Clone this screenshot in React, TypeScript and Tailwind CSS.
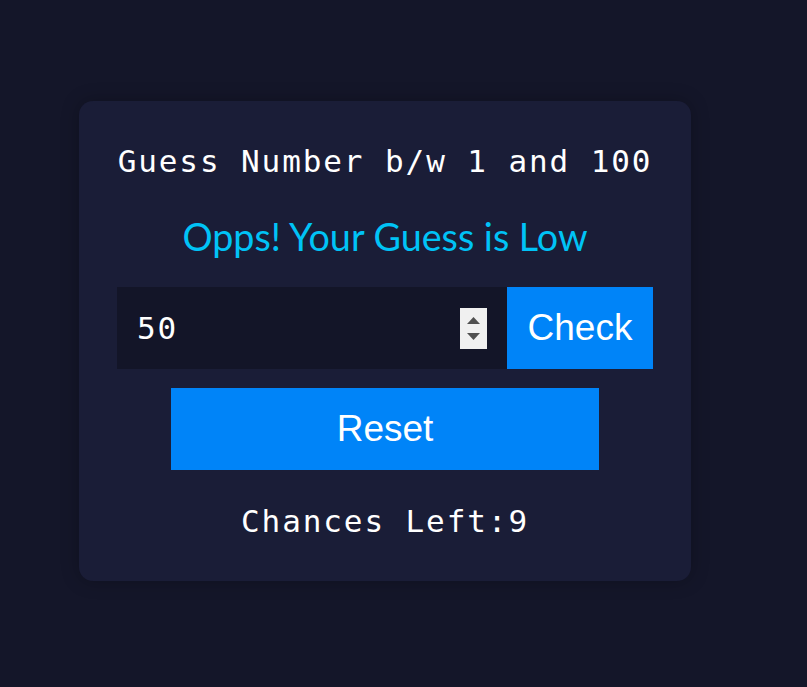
import { useState } from "react";

const MONO = "font-['DejaVu_Sans_Mono',monospace]";

function Spinner() {
  return (
    <div className="flex h-[41px] w-[27px] shrink-0 flex-col items-center justify-center gap-[9px] bg-[#f0f0f0]">
      <svg width="13" height="7" viewBox="0 0 13 7">
        <path d="M6.5 0 L13 7 L0 7 Z" fill="#505050" />
      </svg>
      <svg width="13" height="7" viewBox="0 0 13 7">
        <path d="M0 0 L13 0 L6.5 7 Z" fill="#505050" />
      </svg>
    </div>
  );
}

export default function App() {
  const [guess, setGuess] = useState("50");
  const [chances, setChances] = useState(9);

  return (
    <div className="min-h-screen bg-[#141629] pl-[79px] pt-[101px]">
      <div className="flex w-[612px] flex-col items-center rounded-[14px] bg-[#1a1d37] px-[38px] pb-[38px] pt-[38px] shadow-[0_0_18px_rgba(0,0,0,0.25)]">
        <h1 className={`${MONO} whitespace-nowrap text-[31px] leading-[44px] tracking-[1.9px] text-white`}>
          Guess Number b/w 1 and 100
        </h1>
        <p className="mt-[32px] whitespace-nowrap font-['Lato',sans-serif] text-[37.7px] leading-[44px] text-[#00c3f6]">
          Opps! Your Guess is Low
        </p>
        <div className="mt-[28px] flex h-[82px] w-full">
          <div className="flex min-w-0 flex-1 items-center bg-[#131528] pl-[20px] pr-[20px]">
            <input
              type="text"
              value={guess}
              onChange={(e) => setGuess(e.target.value)}
              className={`${MONO} w-full min-w-0 flex-1 bg-transparent text-[31px] tracking-[1.9px] text-white outline-none`}
            />
            <Spinner />
          </div>
          <button
            type="button"
            onClick={() => setChances((c) => Math.max(0, c - 1))}
            className="w-[146px] shrink-0 bg-[#0084f8] font-['Liberation_Sans',sans-serif] text-[37px] text-white"
          >
            Check
          </button>
        </div>
        <button
          type="button"
          onClick={() => setChances(10)}
          className="mt-[19px] h-[82px] w-[428px] bg-[#0084f8] font-['Liberation_Sans',sans-serif] text-[37px] text-white"
        >
          Reset
        </button>
        <p className={`${MONO} mt-[29px] whitespace-nowrap text-[31px] leading-[44px] tracking-[1.9px] text-white`}>
          Chances Left:{chances}
        </p>
      </div>
    </div>
  );
}
